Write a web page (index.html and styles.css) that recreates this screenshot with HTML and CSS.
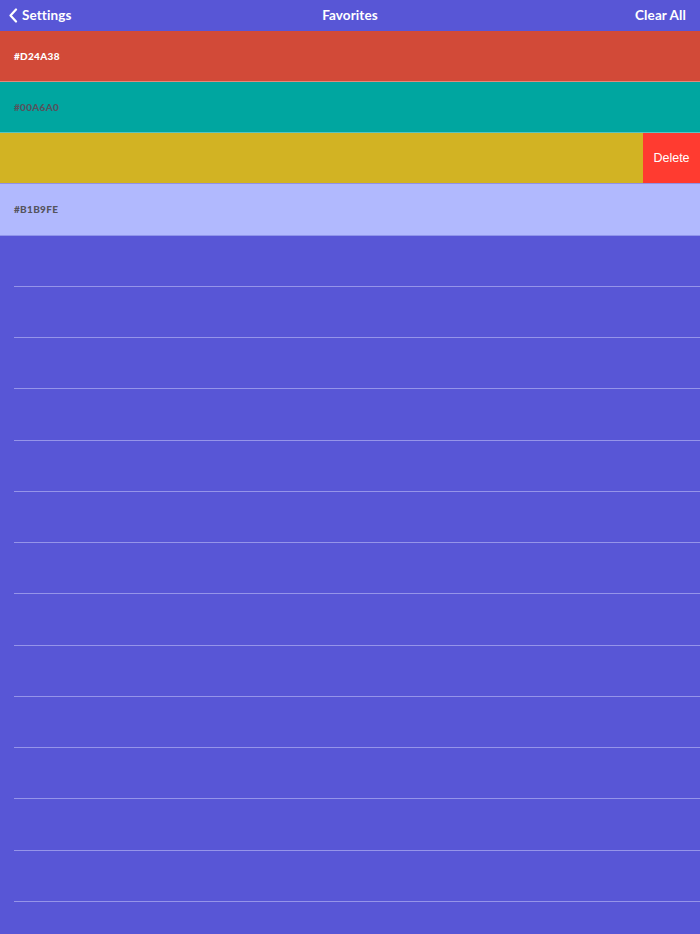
FILE: index.html
```html
<!DOCTYPE html>
<html>
<head>
<meta charset="utf-8">
<link rel="stylesheet" href="styles.css">
</head>
<body>
<header class="navbar">
  <div class="nav-left">
    <svg class="chev" width="10" height="15" viewBox="0 0 10 15"><path d="M8 1.5 L2.5 7.5 L8 13.5" fill="none" stroke="#fff" stroke-width="2.2" stroke-linecap="round" stroke-linejoin="round"/></svg>
    <span>Settings</span>
  </div>
  <div class="nav-title">Favorites</div>
  <div class="nav-right">Clear All</div>
</header>
<main class="list">
  <div class="row colored" style="background:#D24A38"><span class="hex light">#D24A38</span></div>
  <div class="row colored" style="background:#00A6A0"><span class="hex dark">#00A6A0</span></div>
  <div class="row colored swiped">
    <div class="swipe-content"></div>
    <div class="delete">Delete</div>
  </div>
  <div class="row colored last" style="background:#B1B9FE"><span class="hex dark">#B1B9FE</span></div>
  <div class="row empty"></div>
  <div class="row empty"></div>
  <div class="row empty"></div>
  <div class="row empty"></div>
  <div class="row empty"></div>
  <div class="row empty"></div>
  <div class="row empty"></div>
  <div class="row empty"></div>
  <div class="row empty"></div>
  <div class="row empty"></div>
  <div class="row empty"></div>
  <div class="row empty"></div>
  <div class="row empty"></div>
  <div class="row empty"></div>
</main>
</body>
</html>
```
FILE: styles.css
```css
html, body {
  margin: 0;
  padding: 0;
  background: #5856D6;
  height: 934px;
  overflow: hidden;
}
body {
  font-family: "Lato", "Open Sans", sans-serif;
  color: #fff;
}
.navbar {
  height: 30.5px;
  display: flex;
  align-items: center;
  justify-content: space-between;
  position: relative;
  padding: 0 14px 0 8px;
  font-weight: 700;
  font-size: 13.5px;
  letter-spacing: 0.1px;
}
.nav-left {
  display: flex;
  align-items: center;
  gap: 4px;
}
.chev { display: block; }
.nav-title {
  position: absolute;
  left: 0;
  right: 0;
  text-align: center;
  pointer-events: none;
}
.list {
  display: flex;
  flex-direction: column;
}
.row {
  height: 51.25px;
  box-sizing: border-box;
  flex: none;
  display: flex;
  align-items: center;
  position: relative;
}
.row.colored {
  border-bottom: 1px solid rgba(255,255,255,0.35);
  padding-left: 14px;
}
.row.colored.last {
  border-bottom-color: rgba(80,80,200,0.35);
}
.row.empty {
  margin-left: 14px;
  border-bottom: 1px solid rgba(190,190,245,0.6);
}
.hex {
  font-size: 10px;
  font-weight: 900;
  letter-spacing: 0.3px;
}
.hex.light { color: #fff; }
.hex.dark { color: #55545e; }
.row.swiped {
  padding-left: 0;
  overflow: hidden;
}
.swipe-content {
  flex: 1;
  height: 100%;
  background: #D2B323;
}
.delete {
  width: 57px;
  height: 100%;
  background: #FF3B30;
  color: #fff;
  font-family: "Liberation Sans", "Roboto", sans-serif;
  font-size: 12.5px;
  display: flex;
  align-items: center;
  justify-content: center;
  flex: none;
}
```
